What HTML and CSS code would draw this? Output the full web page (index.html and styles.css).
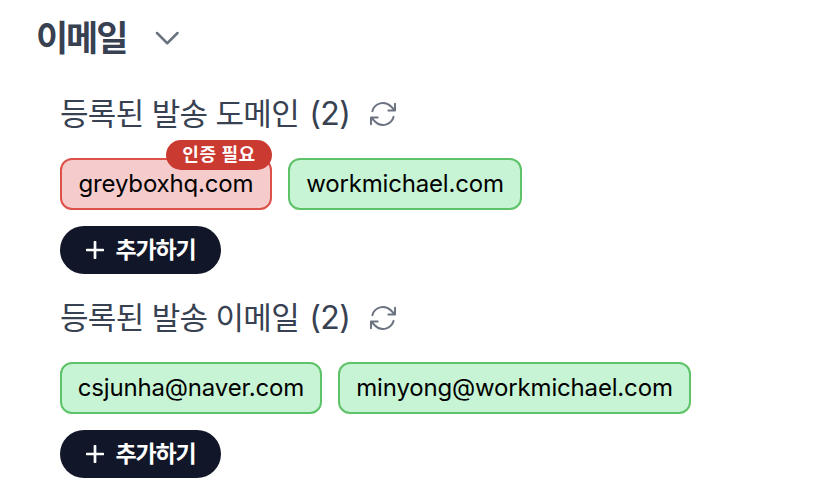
FILE: index.html
```html
<!DOCTYPE html>
<html lang="ko">
<head>
<meta charset="utf-8">
<title>이메일</title>
<link rel="stylesheet" href="styles.css">
</head>
<body>
<main class="panel">
  <header class="title-row">
    <h1 class="title">이메일</h1>
    <svg class="chevron" viewBox="0 0 24 24"><path d="M2 7 12.25 17.25 22.5 7"/></svg>
  </header>
  <section class="section">
    <h2 class="heading"><span class="heading-text">등록된 발송 도메인 <span class="count">(2)</span></span>
      <svg class="refresh" viewBox="0 0 24 24"><path d="M16.023 9.348h4.992v-.001M2.985 19.644v-4.992m0 0h4.992m-4.993 0 3.181 3.183a8.25 8.25 0 0 0 13.803-3.7M4.031 9.865a8.25 8.25 0 0 1 13.803-3.7l3.181 3.182m0-4.991v4.99"/></svg></h2>
    <div class="chips">
      <div class="chip chip-pending chip-a"><span>greyboxhq.com</span><span class="badge"><span>인증 필요</span></span></div>
      <div class="chip chip-b"><span>workmichael.com</span></div>
    </div>
    <button class="add"><svg class="plus" viewBox="0 0 18 18"><path d="M9 1v16M1 9h16"/></svg><span>추가하기</span></button>
  </section>
  <section class="section">
    <h2 class="heading"><span class="heading-text">등록된 발송 이메일 <span class="count">(2)</span></span>
      <svg class="refresh" viewBox="0 0 24 24"><path d="M16.023 9.348h4.992v-.001M2.985 19.644v-4.992m0 0h4.992m-4.993 0 3.181 3.183a8.25 8.25 0 0 0 13.803-3.7M4.031 9.865a8.25 8.25 0 0 1 13.803-3.7l3.181 3.182m0-4.991v4.99"/></svg></h2>
    <div class="chips">
      <div class="chip chip-c"><span>csjunha@naver.com</span></div>
      <div class="chip chip-d"><span>minyong@workmichael.com</span></div>
    </div>
    <button class="add"><svg class="plus" viewBox="0 0 18 18"><path d="M9 1v16M1 9h16"/></svg><span>추가하기</span></button>
  </section>
</main>
</body>
</html>
```
FILE: styles.css
```css
* { box-sizing: border-box; }
body { margin: 0; background: #fff; font-family: Inter, "Noto Sans CJK KR", sans-serif; color: #374151; }
.panel { padding: 10px 36px; }
.title-row { display: flex; align-items: center; gap: 28px; height: 56px; }
.title { width: 91px; margin: 0; font-size: 35px; line-height: 56px; font-weight: 700; letter-spacing: -2.1px; white-space: nowrap; }
svg { fill: none; stroke: #6b7280; stroke-linecap: round; stroke-linejoin: round; flex: none; }
.chevron { width: 24px; height: 24px; stroke-width: 2.5; }
.section { padding-left: 24px; }
.section:first-of-type { margin-top: 24px; }
.section + .section { margin-top: 20px; }
.heading { display: flex; align-items: center; gap: 16px; height: 48px; margin: 0; font-size: 31px; font-weight: 400; line-height: 48px; white-space: nowrap; }
.heading-text { width: 291px; letter-spacing: -0.65px; }
.count { margin-left: 2px; font-size: 32px; letter-spacing: -0.5px; }
.refresh { width: 32px; height: 32px; stroke-width: 1.5; }
.chips { display: flex; gap: 16px; margin-top: 20px; }
.chip { position: relative; display: flex; justify-content: center; align-items: center; height: 52px; padding-bottom: 2px; border: 2px solid #5ec269; border-radius: 12px; background: #c6f4d4; color: #000; font-size: 24px; letter-spacing: -0.17px; white-space: nowrap; }
.chip-pending { border-color: #dc5148; background: #f5cbcb; }
.chip-a { width: 212px; }
.chip-b { width: 234px; }
.chip-c { width: 262px; }
.chip-d { width: 353px; }
.badge { position: absolute; top: -20px; right: -2px; display: flex; align-items: center; justify-content: center; width: 106px; height: 30px; border-radius: 15px; background: #cb3a31; color: #fff; font-size: 18px; font-weight: 700; letter-spacing: 0.6px; line-height: 30px; }
.add { display: flex; align-items: center; justify-content: center; gap: 11px; width: 161px; height: 48px; margin-top: 16px; padding: 0 0 0 1px; border: 0; border-radius: 24px; background: #111729; color: #fff; font: 700 23px/48px Inter, "Noto Sans CJK KR", sans-serif; letter-spacing: -1.1px; white-space: nowrap; }
.plus { width: 18px; height: 18px; stroke: #fff; stroke-width: 2.7; }
```
